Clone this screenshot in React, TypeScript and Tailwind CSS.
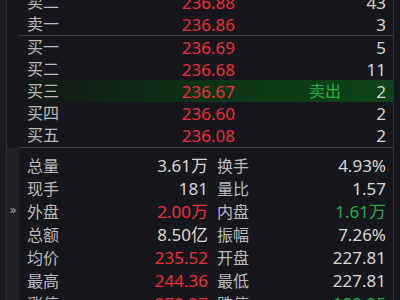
import React from "react";

const FONT = { fontFamily: '"Noto Sans", "Noto Sans CJK SC", sans-serif' };

type BookRow = { label: string; price: string; qty: string; hl?: boolean };

const sells: BookRow[] = [
  { label: "卖二", price: "236.88", qty: "43" },
  { label: "卖一", price: "236.86", qty: "3" },
];
const buys: BookRow[] = [
  { label: "买一", price: "236.69", qty: "5" },
  { label: "买二", price: "236.68", qty: "11" },
  { label: "买三", price: "236.67", qty: "2", hl: true },
  { label: "买四", price: "236.60", qty: "2" },
  { label: "买五", price: "236.08", qty: "2" },
];

type Stat = { l1: string; v1: string; c1: string; l2: string; v2: string; c2: string };
const W = "text-[#d6d6d6]";
const R = "text-[#ea2f3a]";
const G = "text-[#1fb04a]";
const stats: Stat[] = [
  { l1: "总量", v1: "3.61万", c1: W, l2: "换手", v2: "4.93%", c2: W },
  { l1: "现手", v1: "181", c1: W, l2: "量比", v2: "1.57", c2: W },
  { l1: "外盘", v1: "2.00万", c1: R, l2: "内盘", v2: "1.61万", c2: G },
  { l1: "总额", v1: "8.50亿", c1: W, l2: "振幅", v2: "7.26%", c2: W },
  { l1: "均价", v1: "235.52", c1: R, l2: "开盘", v2: "227.81", c2: W },
  { l1: "最高", v1: "244.36", c1: R, l2: "最低", v2: "227.81", c2: W },
  { l1: "涨停", v1: "272.27", c1: R, l2: "跌停", v2: "182.25", c2: G },
];

function Row({ r }: { r: BookRow }) {
  return (
    <div
      className={
        "flex h-[22px] items-center pr-[7px] " +
        (r.hl
          ? "ml-[6px] pl-[2px] bg-gradient-to-r from-[#111914] via-[#0c3315] to-[#0d4417]"
          : "pl-[8px]")
      }
    >
      <span className="w-[56px] text-[16px] text-[#bababa]">{r.label}</span>
      <span className="w-[152px] text-right text-[17px] text-[#ea2f3a]">{r.price}</span>
      <span className="w-[106px] text-right text-[16px] text-[#1fb04a]">{r.hl ? "卖出" : ""}</span>
      <span className="flex-1 text-right text-[17px] text-[#d6d6d6]">{r.qty}</span>
    </div>
  );
}

export default function App() {
  return (
    <div
      className="flex h-[300px] w-[400px] overflow-hidden bg-[#15171c] text-[16px] leading-none"
      style={FONT}
    >
      <div className="flex w-[19px] shrink-0">
        <div className="w-[6px] bg-[#1a1c21]" />
        <div className="w-[1px] bg-[#2c2f35]" />
        <div className="flex flex-1 flex-col">
          <div className="h-[148px]" />
          <div className="flex flex-1 items-start justify-center bg-[#1f2126] pt-[55px] text-[13px] text-[#a9a9a9]">
            »
          </div>
        </div>
      </div>
      <div className="flex w-[374px] flex-col">
        <div className="-mt-[9px] flex flex-col">
          {sells.map((r) => (
            <Row key={r.label} r={r} />
          ))}
          <div className="h-[1px] bg-[#3a3d44]" />
          {buys.map((r) => (
            <Row key={r.label} r={r} />
          ))}
          <div className="mt-[1px] h-[1px] bg-[#3a3d44]" />
        </div>
        <div className="flex flex-col pt-[6px]">
          {stats.map((s) => (
            <div key={s.l1} className="flex h-[23px] items-center pl-[8px] pr-[7px]">
              <span className="w-[40px] text-[#bababa]">{s.l1}</span>
              <span className={"w-[141px] text-right text-[17px] " + s.c1}>{s.v1}</span>
              <span className="ml-[9px] w-[40px] text-[#bababa]">{s.l2}</span>
              <span className={"flex-1 text-right text-[17px] " + s.c2}>{s.v2}</span>
            </div>
          ))}
        </div>
      </div>
      <div className="w-[1px] bg-[#2c2f35]" />
      <div className="flex-1 bg-[#15171c]" />
    </div>
  );
}
